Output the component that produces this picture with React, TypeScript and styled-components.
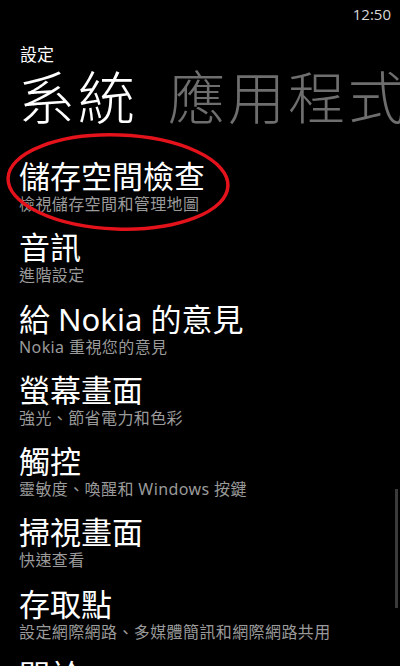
import React from 'react';
import styled, { createGlobalStyle } from 'styled-components';

interface settingItem {
  title: string;
  sub: string;
}

const items: Array<settingItem> = [
  { title: '儲存空間檢查', sub: '檢視儲存空間和管理地圖' },
  { title: '音訊', sub: '進階設定' },
  { title: '給 Nokia 的意見', sub: 'Nokia 重視您的意見' },
  { title: '螢幕畫面', sub: '強光、節省電力和色彩' },
  { title: '觸控', sub: '靈敏度、喚醒和 Windows 按鍵' },
  { title: '掃視畫面', sub: '快速查看' },
  { title: '存取點', sub: '設定網際網路、多媒體簡訊和網際網路共用' },
  { title: '關於', sub: '' },
];

const GlobalStyle = createGlobalStyle`
  html, body {
    margin: 0;
    padding: 0;
    background: #000000;
  }
  body {
    font-family: 'Noto Sans', 'Noto Sans CJK TC', sans-serif;
  }
`;

export default function App() {
  return (
    <Screen>
      <GlobalStyle />
      <StatusBar>
        <Clock>12:50</Clock>
      </StatusBar>
      <AppTitle>設定</AppTitle>
      <Pivot>
        <PivotHeader active>系統</PivotHeader>
        <PivotHeader>應用程式</PivotHeader>
      </Pivot>
      <List>
        {items.map((item) => (
          <Item key={item.title}>
            <ItemTitle>{item.title}</ItemTitle>
            <ItemSub>{item.sub}</ItemSub>
          </Item>
        ))}
      </List>
      <ScrollThumb />
      <Circle viewBox="0 0 400 666" width="400" height="666">
        <ellipse
          cx="118"
          cy="182"
          rx="110"
          ry="47"
          fill="none"
          stroke="#e3121b"
          strokeWidth="3.5"
          transform="rotate(2 118 182)"
        />
      </Circle>
    </Screen>
  );
}

const Screen = styled.div`
  position: relative;
  width: 400px;
  height: 666px;
  overflow: hidden;
  background: #000000;
  color: #ffffff;
`;

const StatusBar = styled.div`
  display: flex;
  justify-content: flex-end;
  height: 30px;
  padding: 4px 9px 0 0;
  box-sizing: border-box;
`;

const Clock = styled.span`
  font-family: 'Open Sans', 'Noto Sans', sans-serif;
  font-size: 15px;
  line-height: 20px;
  color: #d8d8d8;
`;

const AppTitle = styled.div`
  padding: 13px 0 0 20px;
  font-family: 'Noto Sans CJK TC', sans-serif;
  font-size: 17px;
  line-height: 22px;
  color: #ffffff;
`;

const Pivot = styled.div`
  display: flex;
  gap: 30px;
  padding-left: 18px;
  margin-top: -4px;
  white-space: nowrap;
`;

const PivotHeader = styled.div<{ active?: boolean }>`
  font-family: 'Noto Sans CJK TC', sans-serif;
  font-size: 57px;
  font-weight: 300;
  line-height: 66px;
  letter-spacing: 3px;
  color: ${(props) => (props.active ? '#ffffff' : '#6e6e6e')};
`;

const List = styled.div`
  display: flex;
  flex-direction: column;
  padding: 31px 0 0 19px;
`;

const Item = styled.div`
  display: flex;
  flex-direction: column;
  height: 71.3px;
`;

const ItemTitle = styled.div`
  font-family: 'Noto Sans', 'Noto Sans CJK TC', sans-serif;
  font-size: 31px;
  line-height: 36px;
  color: #ffffff;
`;

const ItemSub = styled.div`
  font-family: 'Noto Sans', 'Noto Sans CJK TC', sans-serif;
  font-size: 16px;
  line-height: 20px;
  letter-spacing: 0.4px;
  color: #9a9a9a;
`;

const ScrollThumb = styled.div`
  position: absolute;
  right: 2px;
  top: 489px;
  width: 3px;
  height: 119px;
  background: #3a3a3a;
`;

const Circle = styled.svg`
  position: absolute;
  left: 0;
  top: 0;
  pointer-events: none;
`;
